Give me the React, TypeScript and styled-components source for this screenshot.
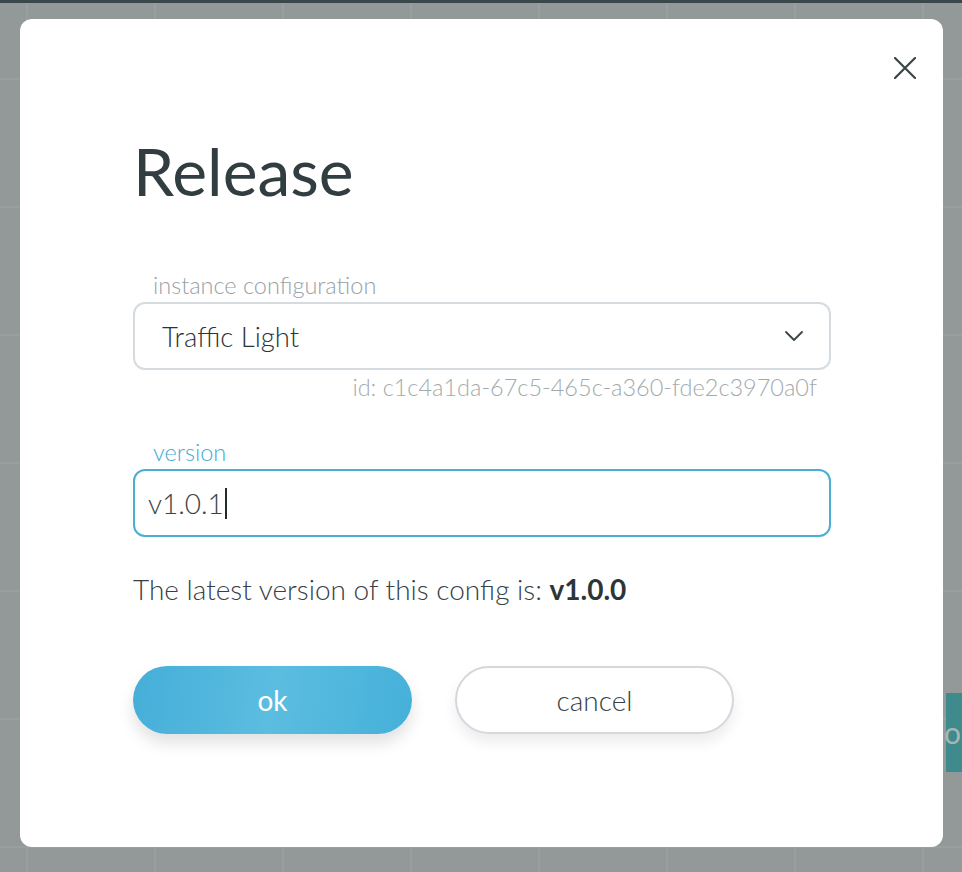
import React from "react";
import styled, { createGlobalStyle } from "styled-components";

const GlobalStyle = createGlobalStyle`
  html, body {
    margin: 0;
    padding: 0;
    width: 962px;
    height: 872px;
    overflow: hidden;
    font-family: Lato, "Open Sans", sans-serif;
  }
`;

const Backdrop = styled.div`
  position: relative;
  width: 962px;
  height: 872px;
  box-sizing: border-box;
  padding: 19px 0 0 20px;
  background-color: #939899;
  background-image:
    linear-gradient(to bottom, #3a474b 0, #3a474b 3px, transparent 3px),
    linear-gradient(to right, #999ea0 2px, transparent 2px),
    linear-gradient(to bottom, #999ea0 2px, transparent 2px);
  background-size: 100% 100%, 128px 128px, 128px 128px;
  background-position: 0 0, 26px 0, 0 78px;
  background-repeat: no-repeat, repeat, repeat;
  overflow: hidden;
`;

const BehindButton = styled.div`
  position: absolute;
  left: 946px;
  top: 693px;
  width: 60px;
  height: 79px;
  background: #3f8a8c;
  color: #a9b6b6;
  font-size: 30px;
  line-height: 79px;
  text-indent: -2px;
`;

const Modal = styled.div`
  position: relative;
  width: 923px;
  height: 828px;
  box-sizing: border-box;
  padding: 113px 112px 0 113px;
  background: #ffffff;
  border-radius: 12px;
`;

const CloseButton = styled.button`
  position: absolute;
  top: 38px;
  right: 27px;
  width: 22px;
  height: 22px;
  padding: 0;
  border: none;
  background: none;
  cursor: pointer;
  display: flex;
`;

const Title = styled.h1`
  margin: 0;
  font-size: 66px;
  line-height: 77px;
  font-weight: 400;
  color: #313d41;
`;

const Field = styled.div<{ $gap: number }>`
  margin-top: ${(p) => p.$gap}px;
  display: flex;
  flex-direction: column;
`;

const Label = styled.label<{ $active?: boolean }>`
  padding-left: 20px;
  font-size: 23.5px;
  line-height: 26px;
  font-weight: 300;
  color: ${(p) => (p.$active ? "#43acd6" : "#99a1a6")};
  margin-bottom: 4px;
`;

const Box = styled.div<{ $active?: boolean }>`
  height: 68px;
  box-sizing: border-box;
  border: 2px solid ${(p) => (p.$active ? "#4aaed7" : "#d6dbdf")};
  border-radius: 12px;
  display: flex;
  align-items: center;
  font-size: 27.5px;
  font-weight: 300;
  color: #2a3336;
`;

const SelectBox = styled(Box)`
  padding: 0 26px 0 27px;
  justify-content: space-between;
`;

const InputBox = styled(Box)`
  padding: 0 13px;
  font-size: 28px;
  color: #3a4447;
`;

const Caret = styled.span`
  display: inline-block;
  width: 2px;
  height: 31px;
  background: #222a2c;
  margin-left: 1px;
`;

const Hint = styled.div`
  align-self: flex-end;
  margin-right: 14px;
  margin-top: 4px;
  font-size: 23.5px;
  line-height: 26px;
  font-weight: 300;
  color: #a3aaad;
`;

const Note = styled.p`
  margin: 35px 0 0;
  font-size: 28px;
  line-height: 34px;
  font-weight: 300;
  color: #364145;

  strong {
    font-weight: 700;
    color: #2c3538;
  }
`;

const Actions = styled.div`
  margin-top: 60px;
  display: flex;
  gap: 43px;
`;

const Button = styled.button<{ $primary?: boolean }>`
  width: 279px;
  height: 68px;
  border-radius: 34px;
  font-family: Lato, "Open Sans", sans-serif;
  font-size: 28px;
  font-weight: ${(p) => (p.$primary ? 400 : 300)};
  cursor: pointer;
  box-sizing: border-box;
  border: ${(p) => (p.$primary ? "none" : "2px solid #d3d8dd")};
  background: ${(p) =>
    p.$primary ? "linear-gradient(100deg, #45aed8 0%, #5bbde0 50%, #45b0d9 100%)" : "#ffffff"};
  color: ${(p) => (p.$primary ? "#ffffff" : "#364145")};
  box-shadow: ${(p) =>
    p.$primary ? "0 9px 16px rgba(0, 0, 0, 0.12)" : "0 8px 14px rgba(0, 0, 0, 0.08)"};
`;

export default function App() {
  return (
    <>
      <GlobalStyle />
      <Backdrop>
        <BehindButton>o</BehindButton>
        <Modal>
          <CloseButton aria-label="close">
            <svg width="22" height="22" viewBox="0 0 22 22">
              <path d="M1 1 L21 21 M21 1 L1 21" stroke="#3a4447" strokeWidth="2.2" strokeLinecap="round" />
            </svg>
          </CloseButton>
          <Title>Release</Title>
          <Field $gap={63}>
            <Label>instance configuration</Label>
            <SelectBox>
              <span>Traffic Light</span>
              <svg width="18" height="10" viewBox="0 0 18 10">
                <path d="M1 1 L9 9 L17 1" fill="none" stroke="#3a4447" strokeWidth="1.8" strokeLinecap="round" strokeLinejoin="round" />
              </svg>
            </SelectBox>
            <Hint>id: c1c4a1da-67c5-465c-a360-fde2c3970a0f</Hint>
          </Field>
          <Field $gap={39}>
            <Label $active>version</Label>
            <InputBox $active>
              v1.0.1<Caret />
            </InputBox>
          </Field>
          <Note>
            The latest version of this config is: <strong>v1.0.0</strong>
          </Note>
          <Actions>
            <Button $primary>ok</Button>
            <Button>cancel</Button>
          </Actions>
        </Modal>
      </Backdrop>
    </>
  );
}
